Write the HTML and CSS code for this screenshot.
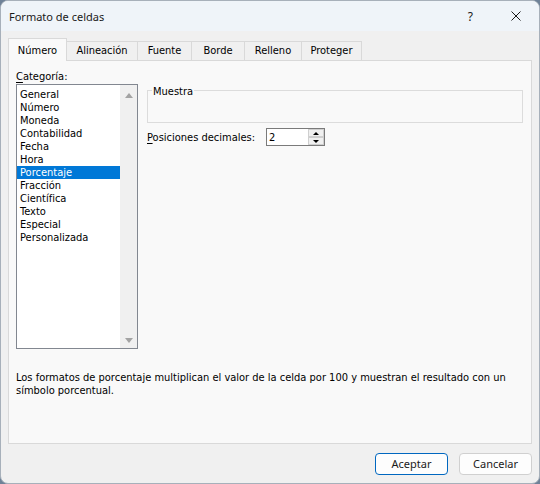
FILE: index.html
```html
<!DOCTYPE html>
<html lang="es">
<head>
<meta charset="utf-8">
<title>Formato de celdas</title>
<link rel="stylesheet" href="styles.css">
</head>
<body>
<div class="window">
  <div class="titlebar">
    <span class="title">Formato de celdas</span>
    <span class="help">?</span>
    <span class="close"><svg width="10" height="10" viewBox="0 0 10 10"><path d="M0.5 0.5 L9.5 9.5 M9.5 0.5 L0.5 9.5" stroke="#1a1a1a" stroke-width="1" fill="none"/></svg></span>
  </div>
  <div class="content">
    <div class="tabs">
      <div class="tab active t1">Número</div>
      <div class="tab t2">Alineación</div>
      <div class="tab t3">Fuente</div>
      <div class="tab t4">Borde</div>
      <div class="tab t5">Relleno</div>
      <div class="tab t6">Proteger</div>
    </div>
    <div class="panel">
      <div class="main">
        <div class="cat">
          <div class="label"><u>C</u>ategoría:</div>
          <div class="listbox">
            <ul class="items">
              <li>General</li>
              <li>Número</li>
              <li>Moneda</li>
              <li>Contabilidad</li>
              <li>Fecha</li>
              <li>Hora</li>
              <li class="sel">Porcentaje</li>
              <li>Fracción</li>
              <li>Científica</li>
              <li>Texto</li>
              <li>Especial</li>
              <li>Personalizada</li>
            </ul>
            <div class="scrollbar">
              <span class="arrow up"></span>
              <span class="arrow down"></span>
            </div>
          </div>
        </div>
        <div class="options">
          <div class="group"><span class="legend">Muestra</span></div>
          <div class="decimals">
            <span class="dlabel"><u>P</u>osiciones decimales:</span>
            <div class="spin">
              <span class="val">2</span>
              <div class="spinbtns">
                <span class="sb"><span class="tri-up"></span></span>
                <span class="sb"><span class="tri-down"></span></span>
              </div>
            </div>
          </div>
        </div>
      </div>
      <p class="desc">Los formatos de porcentaje multiplican el valor de la celda por 100 y muestran el resultado con un símbolo porcentual.</p>
    </div>
    <div class="buttons">
      <button class="btn default">Aceptar</button>
      <button class="btn">Cancelar</button>
    </div>
  </div>
</div>
</body>
</html>
```
FILE: styles.css
```css
html, body {
  margin: 0;
  padding: 0;
}
body {
  width: 540px;
  height: 484px;
  overflow: hidden;
  background: #6f8298;
}
.window {
  width: 540px;
  height: 484px;
  box-sizing: border-box;
  border: 1px solid #a7b0ba;
  border-radius: 8px;
  background: #f0f0f0;
  overflow: hidden;
  display: flex;
  flex-direction: column;
  font-family: "DejaVu Sans Condensed", "DejaVu Sans", sans-serif;
  font-size: 11px;
  color: #000;
}
.titlebar {
  height: 30px;
  flex: none;
  background: #eff4f9;
  display: flex;
  align-items: center;
  padding-left: 8px;
  font-family: "Noto Sans", sans-serif;
  font-size: 11px;
  color: #1a1a1a;
}
.title {
  flex: 1;
}
.help {
  font-size: 12px;
  margin-right: 38px;
}
.close {
  display: flex;
  margin-right: 18px;
}
.content {
  flex: 1;
  padding: 7px 7px 0 7px;
}
.tabs {
  display: flex;
  align-items: flex-end;
  height: 23px;
  margin-bottom: -1px;
  position: relative;
  z-index: 1;
}
.tab {
  box-sizing: border-box;
  height: 19px;
  margin-bottom: 1px;
  border: 1px solid #d9d9d9;
  border-bottom: none;
  background: #f0f0f0;
  line-height: 13px;
  padding-top: 2px;
  text-align: center;
  margin-left: -1px;
}
.tab.active {
  height: 23px;
  margin-bottom: 0;
  padding-top: 5px;
  background: #f9f9f9;
  border-color: #d9d9d9;
  margin-left: 0;
  position: relative;
  z-index: 2;
}
.t1 { width: 59px; }
.t2 { width: 72px; }
.t3 { width: 55px; }
.t4 { width: 54px; }
.t5 { width: 58px; }
.t6 { width: 61px; }
.panel {
  box-sizing: border-box;
  height: 384px;
  border: 1px solid #d9d9d9;
  background: #f9f9f9;
  padding: 9px 8px 0 7px;
}
.main {
  display: flex;
  gap: 9px;
}
.label {
  line-height: 13px;
  margin-bottom: 1px;
}
.label u, .dlabel u {
  text-decoration-thickness: 1px;
  text-underline-offset: 2px;
}
.listbox {
  box-sizing: border-box;
  width: 122px;
  height: 265px;
  border: 1px solid #828790;
  background: #fff;
  display: flex;
}
.items {
  list-style: none;
  margin: 0;
  padding: 3px 0 0 0;
  flex: 1;
}
.items li {
  line-height: 13px;
  height: 13px;
  padding-left: 3px;
  white-space: nowrap;
}
.items li.sel {
  background: #0078d7;
  color: #fff;
}
.scrollbar {
  width: 17px;
  background: #f0f0f0;
  display: flex;
  flex-direction: column;
  justify-content: space-between;
  align-items: center;
  padding: 8px 0 5px 0;
  box-sizing: border-box;
}
.arrow {
  width: 0;
  height: 0;
  border-left: 4px solid transparent;
  border-right: 4px solid transparent;
}
.arrow.up {
  border-bottom: 5px solid #a3a3a3;
}
.arrow.down {
  border-top: 5px solid #a3a3a3;
}
.options {
  flex: 1;
  padding-top: 20px;
}
.group {
  position: relative;
  box-sizing: border-box;
  height: 33px;
  width: 376px;
  border: 1px solid #dcdcdc;
}
.legend {
  position: absolute;
  top: -6px;
  left: 4px;
  padding: 0 1px;
  line-height: 13px;
  background: #f9f9f9;
}
.decimals {
  display: flex;
  align-items: center;
  margin-top: 5px;
}
.dlabel {
  width: 119px;
  line-height: 13px;
}
.spin {
  box-sizing: border-box;
  width: 59px;
  height: 18px;
  border: 1px solid #7a7a7a;
  background: #fff;
  display: flex;
  align-items: center;
}
.val {
  flex: 1;
  padding-left: 2px;
  line-height: 13px;
}
.spinbtns {
  width: 16px;
  height: 16px;
  display: flex;
  flex-direction: column;
}
.sb {
  flex: 1;
  box-sizing: border-box;
  border: 1px solid #cfcfcf;
  background: #f0f0f0;
  display: flex;
  align-items: center;
  justify-content: center;
}
.tri-up {
  width: 0;
  height: 0;
  border-left: 3px solid transparent;
  border-right: 3px solid transparent;
  border-bottom: 3px solid #000;
}
.tri-down {
  width: 0;
  height: 0;
  border-left: 3px solid transparent;
  border-right: 3px solid transparent;
  border-top: 3px solid #000;
}
.desc {
  margin: 22px 0 0 0;
  line-height: 13px;
  width: 512px;
}
.buttons {
  display: flex;
  justify-content: flex-end;
  gap: 11px;
  margin-top: 9px;
}
.btn {
  box-sizing: border-box;
  width: 73px;
  height: 22px;
  border: 1px solid #d0d0d0;
  border-radius: 4px;
  background: #fdfdfd;
  font-family: "Noto Sans", sans-serif;
  font-size: 11px;
  color: #1a1a1a;
  padding: 0;
  line-height: 18px;
}
.btn.default {
  border-color: #0067c0;
}
```
